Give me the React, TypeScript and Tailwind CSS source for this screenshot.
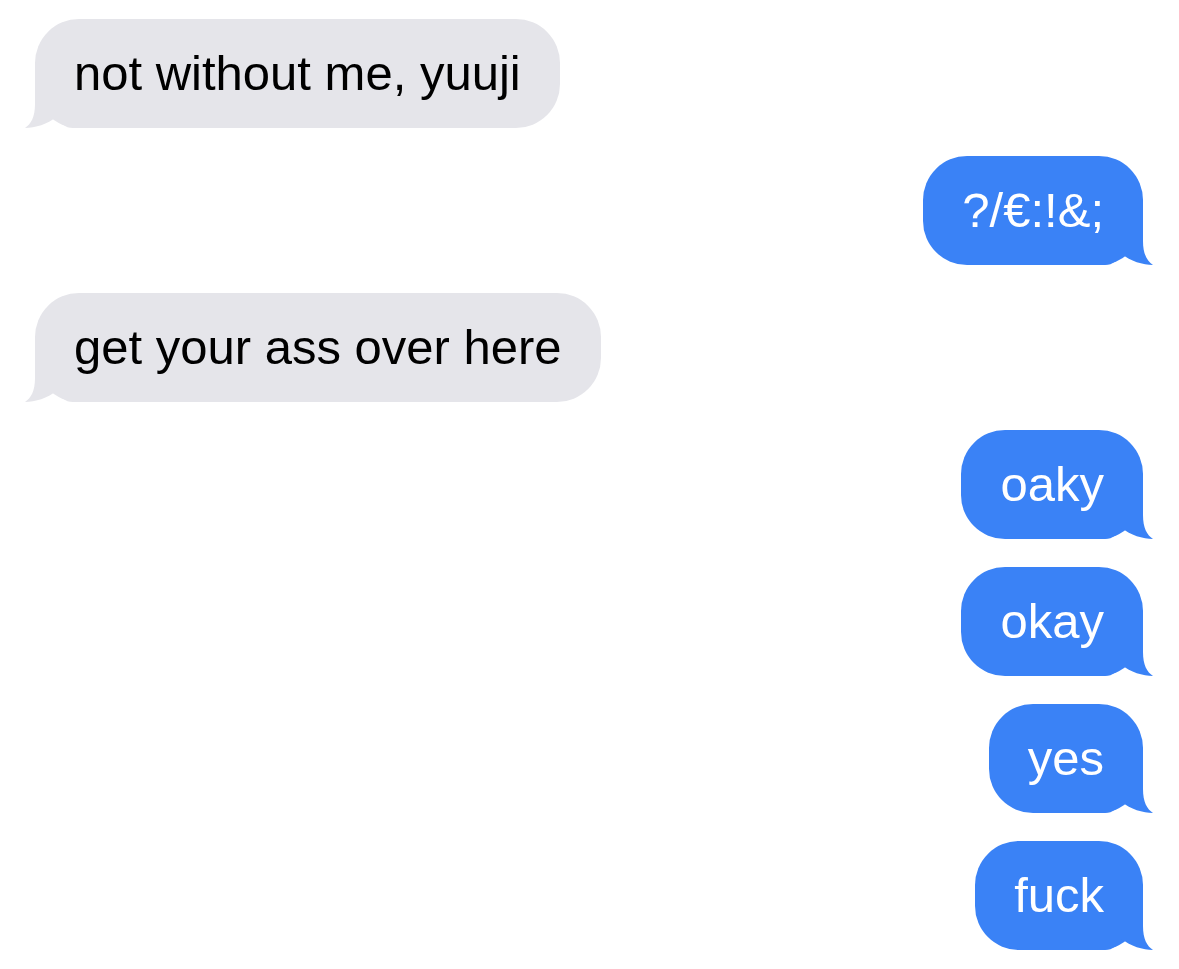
type Msg = { text: string; mine: boolean };

const messages: Msg[] = [
  { text: "not without me, yuuji", mine: false },
  { text: "?/€:!&;", mine: true },
  { text: "get your ass over here", mine: false },
  { text: "oaky", mine: true },
  { text: "okay", mine: true },
  { text: "yes", mine: true },
  { text: "fuck", mine: true },
];

// tail drawn for the right side, mirrored for incoming bubbles
function Tail({ mine }: { mine: boolean }) {
  return (
    <svg
      width="54"
      height="44"
      viewBox="0 0 54 44"
      className={
        mine
          ? "absolute bottom-0 right-[-10px]"
          : "absolute bottom-0 left-[-10px] -scale-x-100"
      }
    >
      <path
        d="M0 0 L44 0 L44 20 C44 33 48 40 54 44 C44 44 31 40 23 33 C19 39 14 44 6 44 L0 44 Z"
        fill={mine ? "#3a82f6" : "#e5e5ea"}
      />
    </svg>
  );
}

function Bubble({ text, mine }: Msg) {
  return (
    <div className={mine ? "flex justify-end" : "flex justify-start"}>
      <div
        className={
          "relative flex h-[109px] items-center rounded-[44px] px-[39px] " +
          (mine ? "bg-[#3a82f6] text-white" : "bg-[#e5e5ea] text-black")
        }
      >
        <Tail mine={mine} />
        <span className="relative whitespace-nowrap text-[49px] leading-none">{text}</span>
      </div>
    </div>
  );
}

export default function App() {
  return (
    <div
      className="flex min-h-[969px] w-[1179px] flex-col gap-[28px] bg-white pl-[35px] pr-[36px] pt-[19px]"
      style={{ fontFamily: '"Liberation Sans", Arial, sans-serif' }}
    >
      {messages.map((m, i) => (
        <Bubble key={i} {...m} />
      ))}
    </div>
  );
}
